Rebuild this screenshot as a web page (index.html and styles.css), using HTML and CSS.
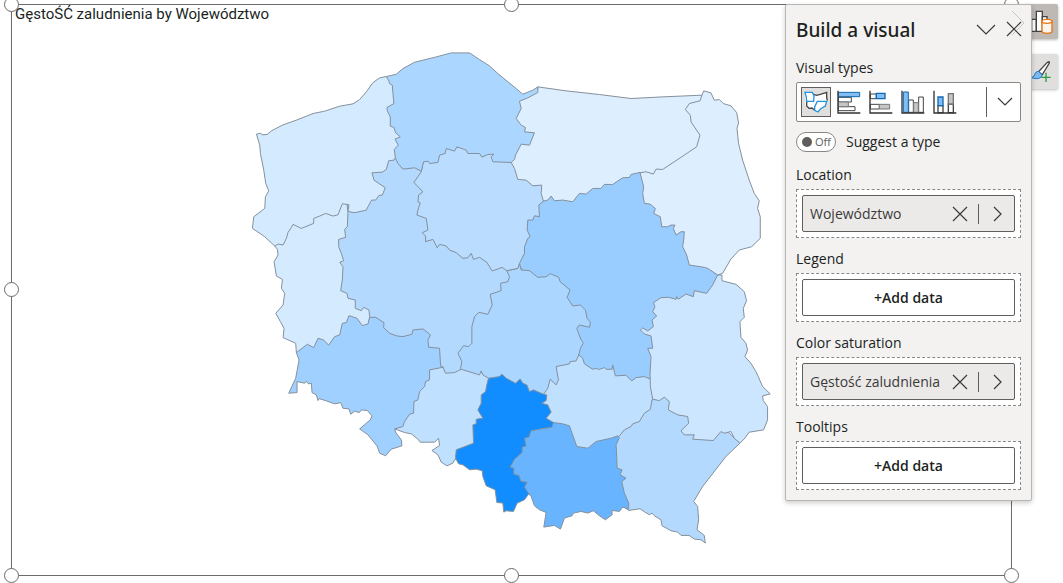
FILE: index.html
```html
<!DOCTYPE html>
<html lang="pl">
<head>
<meta charset="utf-8">
<title>Gęstość zaludnienia</title>
<link rel="stylesheet" href="styles.css">
</head>
<body>
<main class="report">
  <section class="visual" aria-labelledby="visual-title">
    <h1 class="visual-title" id="visual-title">GęstoŚĆ zaludnienia by Województwo</h1>
    <svg class="map" viewBox="36 15 3000 1710" role="img" aria-label="Województwa">
      <polygon class="d3" points="1090,540 1180,450 1260,450 1400,650 1480,760 1600,860 1500,1080 1380,1150 1250,1080 1100,1000 1000,900 980,800 1020,620"/>
      <polygon class="d6" points="1500,720 1660,540 1900,480 2000,520 2100,780 2155,826 2150,900 2000,1000 2000,1180 1900,1200 1700,1150 1650,1050 1600,850"/>
      <polygon class="d4" points="1522,812 1530,830 1525,845 1503,850 1505,872 1472,883 1478,915 1465,943 1438,937 1425,950 1417,980 1417,1030 1407,1040 1392,1037 1375,1060 1387,1085 1383,1105 1400,1200 1600,1240 1760,1160 1738,1065 1743,1045 1752,1028 1745,1020 1732,985 1740,975 1770,982 1773,967 1763,955 1758,930 1743,915 1720,918 1703,892 1712,870 1682,845 1678,832 1653,821 1640,830 1615,832 1590,812 1565,810 1560,790 1555,805"/>
      <polygon class="d2b" points="1265,515 1243,547 1255,560 1270,575 1257,585 1255,605 1262,608 1255,630 1252,645 1280,655 1285,690 1268,698 1278,708 1278,725 1300,718 1313,743 1320,733 1340,738 1350,750 1370,758 1390,775 1405,773 1415,760 1422,778 1440,772 1462,787 1478,813 1508,802 1522,812 1555,805 1560,790 1575,760 1575,740 1585,715 1592,710 1583,690 1585,660 1600,660 1605,647 1620,650 1618,615 1632,603 1660,560 1600,440 1280,440"/>
      <polygon class="d2" points="1632,1183 1645,1165 1652,1138 1670,1155 1677,1140 1670,1100 1710,1092 1712,1085 1730,1083 1738,1065 1750,1075 1755,1092 1780,1108 1790,1105 1797,1109 1815,1103 1820,1108 1838,1108 1840,1095 1848,1128 1880,1126 1897,1143 1910,1133 1935,1130 1952,1137 2000,1180 1980,1300 1850,1400 1700,1380 1610,1230"/>
      <polygon class="d1" points="825,738 833,748 835,765 823,785 830,828 848,838 845,865 855,880 850,915 828,940 842,965 853,985 850,1013 888,1030 890,1058 950,1080 1050,1020 1105,995 1110,950 1108,930 1092,922 1085,932 1067,925 1067,900 1045,895 1042,880 1023,872 1028,840 1030,800 1020,787 1032,782 1025,760 1017,740 1017,718 1038,712 1035,688 1043,680 1045,634 1040,600 920,600 840,700"/>
      <polygon class="d5" points="890,1058 923,1033 942,1043 955,1015 972,1020 987,1036 1005,1010 1020,1005 1028,970 1040,968 1048,947 1072,955 1088,977 1105,972 1110,952 1128,952 1153,968 1152,983 1170,1000 1192,1008 1210,1010 1237,1003 1240,990 1270,987 1293,1005 1285,1020 1287,1042 1320,1045 1323,1098 1330,1100 1340,1200 1250,1270 1185,1290 1190,1300 1205,1320 1207,1338 1175,1348 1158,1368 1140,1360 1132,1338 1105,1305 1080,1287 1112,1260 1117,1248 1103,1232 1085,1230 1079,1238 1065,1234 1053,1243 1048,1227 1030,1225 1023,1208 1005,1212 980,1203 958,1196 955,1202 950,1185 937,1178 935,1150 926,1152 920,1144 915,1150 892,1145 892,1178 867,1180 888,1135 898,1080"/>
      <polygon class="d0" points="1615,260 1700,272 1800,283 1895,295 1990,290 2108,285 2130,400 2120,450 1960,540 1922,517 1895,523 1890,532 1870,533 1840,553 1815,553 1805,565 1780,565 1760,582 1740,580 1720,605 1690,600 1665,602 1655,588 1645,600 1632,603 1625,580 1627,555 1600,557 1580,540 1555,538 1545,505 1535,487 1500,450 1500,300 1540,300 1572,288 1615,266"/>
      <polygon class="d0" points="2108,285 2113,272 2135,278 2145,300 2160,298 2172,310 2195,317 2212,337 2218,368 2213,385 2218,430 2230,480 2250,540 2265,580 2280,602 2275,625 2283,650 2283,715 2257,740 2220,750 2195,777 2170,820 2155,825 2125,805 2115,802 2070,795 2062,765 2050,740 2053,720 2055,695 2045,695 2030,705 2022,685 2027,675 2015,675 2005,680 1987,680 1983,650 1963,640 1968,625 1952,612 1935,610 1930,580 1933,560 1922,518 1940,515 1962,522 1970,507 1990,508 2055,465 2092,440 2102,405 2075,365 2073,345 2058,328 2070,310 2102,302"/>
      <polygon class="d4" points="1160,229 1190,222 1210,205 1245,186 1310,170 1355,158 1410,158 1440,178 1470,197 1495,220 1550,265 1570,282 1600,270 1615,260 1615,277 1585,293 1560,303 1565,325 1550,355 1565,375 1578,382 1575,395 1605,398 1590,435 1565,432 1548,465 1545,478 1535,487 1480,485 1475,470 1483,462 1465,463 1447,471 1440,460 1405,460 1400,450 1372,440 1365,453 1340,445 1337,460 1320,465 1315,487 1290,490 1285,483 1272,485 1265,513 1245,503 1210,507 1195,490 1187,472 1150,460 1130,260"/>
      <polygon class="d1" points="770,402 783,399 787,404 802,403 815,392 850,374 890,360 940,340 975,333 1020,318 1060,311 1080,298 1100,275 1120,247 1140,233 1160,229 1168,242 1170,250 1178,255 1180,280 1183,310 1162,322 1163,332 1172,350 1172,378 1183,382 1188,398 1202,410 1186,417 1196,435 1184,448 1187,472 1183,480 1167,482 1160,508 1148,516 1117,518 1123,540 1157,563 1148,585 1138,586 1128,600 1116,600 1105,620 1100,630 1065,638 1045,634 1048,614 1028,611 1015,644 1000,648 978,640 960,648 942,655 942,670 905,685 880,673 875,682 865,697 860,715 850,735 835,732 825,738 795,710 758,685 762,650 795,625 797,590 807,572 798,550 792,510 782,460 780,435"/>
      <polygon class="d3" points="1860,1308 1875,1290 1895,1280 1900,1272 1920,1265 1935,1240 1953,1228 1958,1200 2050,1180 2180,1290 2222,1330 2180,1370 2110,1460 2083,1505 2095,1520 2098,1560 2093,1590 2115,1607 2118,1630 2105,1620 2085,1618 2070,1607 2045,1607 2035,1597 2015,1593 1988,1578 1985,1560 1965,1548 1958,1540 1950,1545 1938,1538 1922,1527 1888,1532 1820,1480 1820,1330"/>
      <polygon class="d1b" points="2155,825 2168,825 2168,842 2210,853 2235,875 2242,902 2232,925 2235,952 2222,965 2225,1012 2240,1030 2245,1050 2237,1070 2255,1090 2270,1115 2277,1130 2290,1160 2313,1182 2290,1188 2292,1202 2305,1220 2305,1260 2293,1290 2250,1297 2235,1317 2222,1330 2205,1315 2195,1295 2175,1300 2165,1295 2142,1322 2080,1318 2085,1305 2055,1305 2045,1293 2068,1270 2065,1250 2035,1245 2007,1230 2010,1205 1995,1192 1980,1202 1960,1198 1953,1160 1952,1120 1955,1070 1945,1045 1960,1045 1955,1008 1935,1002 1923,990 1930,984 1945,993 1962,980 1958,960 1972,948 1960,935 1967,920 1962,908 1985,893 2008,892 2030,898 2032,890 2037,898 2060,882 2082,890 2085,872 2122,880 2140,855"/>
      <polygon class="d7" points="1662,1268 1690,1272 1710,1278 1715,1292 1725,1320 1732,1340 1765,1345 1790,1325 1835,1315 1855,1308 1860,1313 1850,1335 1852,1370 1853,1405 1868,1410 1862,1425 1880,1435 1867,1445 1875,1480 1888,1510 1888,1528 1870,1522 1860,1535 1838,1532 1838,1545 1818,1560 1800,1548 1782,1533 1765,1540 1745,1535 1722,1540 1718,1548 1695,1555 1683,1588 1665,1577 1633,1582 1640,1538 1620,1530 1605,1518 1595,1490 1588,1482 1500,1400 1600,1270"/>
      <polygon class="d2" points="1185,1287 1210,1280 1215,1265 1230,1243 1242,1240 1243,1205 1255,1200 1260,1175 1275,1160 1278,1145 1290,1140 1290,1110 1305,1107 1330,1102 1338,1120 1365,1118 1385,1108 1440,1125 1445,1113 1450,1125 1467,1135 1520,1180 1480,1330 1400,1370 1365,1380 1360,1390 1342,1398 1325,1387 1315,1365 1297,1352 1320,1337 1317,1315 1305,1327 1262,1327 1255,1318 1235,1302 1215,1298"/>
      <polygon class="d8" points="1467,1135 1500,1130 1507,1123 1520,1135 1548,1150 1562,1137 1570,1150 1582,1155 1590,1175 1602,1170 1632,1183 1642,1185 1640,1202 1627,1210 1645,1215 1655,1237 1640,1255 1662,1268 1657,1282 1625,1287 1595,1293 1588,1312 1575,1315 1580,1338 1568,1342 1568,1358 1545,1378 1532,1402 1543,1405 1543,1423 1558,1427 1565,1445 1583,1447 1575,1462 1588,1482 1575,1500 1553,1510 1542,1535 1520,1533 1513,1537 1510,1510 1492,1508 1487,1470 1460,1458 1450,1430 1448,1413 1430,1408 1410,1410 1390,1395 1377,1392 1368,1375 1370,1350 1422,1330 1420,1275 1430,1272 1430,1258 1450,1255 1435,1230 1445,1210 1445,1185 1458,1175 1463,1150"/>
    </svg>
    <span class="handle top left"></span>
    <span class="handle top center"></span>
    <span class="handle top right"></span>
    <span class="handle middle left"></span>
    <span class="handle bottom left"></span>
    <span class="handle bottom center"></span>
    <span class="handle bottom right"></span>
  </section>

  <nav class="side-tabs" aria-label="Panes">
    <button class="side-tab active" type="button" aria-label="Build visual">
      <svg class="tab-icon" viewBox="0 0 66 72"><g fill="#fff" stroke="#444" stroke-width="4"><path d="M2 28h14v36H2z"/><path d="M16 4h18v60H16z"/><path d="M34 20h14v20H34z"/></g><path d="M33 34v30c0 8 30 8 30 0V34" fill="#faf4ef" stroke="#e87511" stroke-width="4"/><ellipse cx="48" cy="34" rx="15" ry="6" fill="#fff" stroke="#e87511" stroke-width="4"/></svg>
    </button>
    <button class="side-tab" type="button" aria-label="Format visual">
      <svg class="tab-icon" viewBox="0 0 66 72"><path d="M22 36 48 8q8-6 7 1L34 44z" fill="#fff" stroke="#444" stroke-width="4"/><path d="M22 34c-12 0-8 14-20 19 14 6 32 3 31-10z" fill="#7db9ef" stroke="#1b78c8" stroke-width="3"/><path d="M45 38v28M31 52h28" fill="none" stroke="#2c9c49" stroke-width="4"/></svg>
    </button>
  </nav>

  <aside class="panel" aria-labelledby="panel-title">
    <header class="panel-header">
      <h2 class="panel-title" id="panel-title">Build a visual</h2>
      <button class="icon-button" type="button" aria-label="Collapse"><svg class="header-icon" viewBox="0 0 20 20"><path d="m1 5 9 9 9-9"/></svg></button>
      <button class="icon-button" type="button" aria-label="Close"><svg class="header-icon" viewBox="0 0 20 20"><path class="ghost" d="m8-9 12 12L8 15"/><path d="m3 2 14 14M17 2 3 16"/></svg></button>
    </header>

    <h3 class="label">Visual types</h3>
    <div class="types">
      <button class="type selected" type="button" aria-label="Shape map"><svg class="type-icon" viewBox="0 0 72 72"><path d="M3 7h22l12 9 12-3 19-5v14l2 10-5 15-15 8-8 10-18-9-14-1-6-8V34L2 16z" fill="#fff"/><path d="M27 12l10 4 12-3 19-6v15l2 10M8 34v14l7 7 9-1 8 7" fill="none" stroke="#444" stroke-width="4"/><path d="M3 7h22l5 10-1 17H8l-1-12zM40 34h28l-4 14-14 8-8 10-10-5V50z" fill="none" stroke="#2492dc" stroke-width="4"/></svg></button>
      <button class="type" type="button" aria-label="Stacked bar chart"><svg class="type-icon" viewBox="0 0 72 72"><path d="M4 22h39v14H4zM4 50h50v12H4z" fill="#fff" stroke="#444" stroke-width="3"/><path d="M4 36h30v14H4z" fill="#c8c6c4" stroke="#777" stroke-width="3"/><path d="M4 7h64v13H4z" fill="#82bef5" stroke="#1269ae" stroke-width="3"/><path d="M3 2v67h67" fill="none" stroke="#333" stroke-width="4"/></svg></button>
      <button class="type" type="button" aria-label="Clustered bar chart"><svg class="type-icon" viewBox="0 0 72 72"><path d="M4 12h18v14H4zM4 43h27v14H4z" fill="#fff" stroke="#444" stroke-width="3"/><path d="M22 10h26v16H22z" fill="#82bef5" stroke="#1269ae" stroke-width="4"/><path d="M31 43h31v14H31z" fill="#c8c6c4" stroke="#777" stroke-width="3"/><path d="M3 2v67h67" fill="none" stroke="#333" stroke-width="4"/></svg></button>
      <button class="type" type="button" aria-label="Clustered column chart"><svg class="type-icon" viewBox="0 0 72 72"><path d="M23 30h14v37H23zM53 21h14v46H53z" fill="#fff" stroke="#444" stroke-width="3"/><path d="M38 38h14v29H38z" fill="#c8c6c4" stroke="#777" stroke-width="3"/><path d="M7 6h15v61H7z" fill="#82bef5" stroke="#1269ae" stroke-width="3"/><path d="M3 2v67h67" fill="none" stroke="#333" stroke-width="4"/></svg></button>
      <button class="type" type="button" aria-label="Stacked column chart"><svg class="type-icon" viewBox="0 0 72 72"><path d="M15 47h15v21H15zM46 42h15v26H46z" fill="#fff" stroke="#444" stroke-width="4"/><path d="M15 21h15v26H15z" fill="#82bef5" stroke="#1269ae" stroke-width="4"/><path d="M46 11h15v31H46z" fill="#c8c6c4" stroke="#777" stroke-width="4"/><path d="M3 2v67h67" fill="none" stroke="#333" stroke-width="4"/></svg></button>
      <button class="more" type="button" aria-label="More visual types"><svg class="small-icon" viewBox="0 0 16 16"><path d="m1 4 7 7 7-7"/></svg></button>
    </div>

    <label class="suggest">
      <span class="switch"><input class="switch-input" type="checkbox"><span>Off</span></span>
      <span>Suggest a type</span>
    </label>

    <section class="field">
      <h3 class="label">Location</h3>
      <div class="well"><div class="chip"><span class="chip-name">Województwo</span>
        <button class="chip-button" type="button" aria-label="Remove Województwo"><svg class="small-icon" viewBox="0 0 16 16"><path d="m1 1 14 14M15 1 1 15"/></svg></button>
        <button class="chip-button open" type="button" aria-label="Województwo options"><svg class="small-icon" viewBox="0 0 16 16"><path d="m4 1 7 7-7 7"/></svg></button>
      </div></div>
    </section>
    <section class="field">
      <h3 class="label">Legend</h3>
      <div class="well"><button class="add" type="button">+Add data</button></div>
    </section>
    <section class="field">
      <h3 class="label">Color saturation</h3>
      <div class="well"><div class="chip"><span class="chip-name">Gęstość zaludnienia</span>
        <button class="chip-button" type="button" aria-label="Remove Gęstość zaludnienia"><svg class="small-icon" viewBox="0 0 16 16"><path d="m1 1 14 14M15 1 1 15"/></svg></button>
        <button class="chip-button open" type="button" aria-label="Gęstość zaludnienia options"><svg class="small-icon" viewBox="0 0 16 16"><path d="m4 1 7 7-7 7"/></svg></button>
      </div></div>
    </section>
    <section class="field">
      <h3 class="label">Tooltips</h3>
      <div class="well"><button class="add" type="button">+Add data</button></div>
    </section>
  </aside>
</main>
</body>
</html>
```
FILE: styles.css
```css
* {
  box-sizing: border-box;
}

body {
  margin: 0;
  background: #fff;
  color: #201f1e;
  font-family: "Open Sans", "Noto Sans", sans-serif;
  font-size: 14px;
  line-height: 20px;
}

h1, h2, h3 {
  margin: 0;
  font-weight: 400;
}

button {
  padding: 0;
  border: 0;
  background: none;
  color: inherit;
  font: inherit;
}

svg {
  display: block;
}

.report {
  position: relative;
  min-height: 100vh;
  padding: 4px 51px 7px 11px;
  display: flex;
  overflow: hidden;
}

/* selected map visual */
.visual {
  position: relative;
  flex: 1;
  border: 1px solid #6b6b6b;
}

.visual-title {
  position: absolute;
  top: 0;
  left: 3px;
  font-family: Roboto, sans-serif;
  font-size: 15px;
  line-height: 18px;
}

.map {
  width: 100%;
  height: 100%;
}

.map polygon {
  stroke: #84909b;
  stroke-width: 3;
  stroke-linejoin: round;
}

.d0 { fill: #ddeeff; }
.d1 { fill: #d4eaff; }
.d1b { fill: #cce6ff; }
.d2 { fill: #c0e0ff; }
.d2b { fill: #b9dcff; }
.d3 { fill: #b3d9ff; }
.d4 { fill: #abd6ff; }
.d5 { fill: #a0d0ff; }
.d6 { fill: #99ccff; }
.d7 { fill: #69b4ff; }
.d8 { fill: #118dff; }

.handle {
  position: absolute;
  width: 15px;
  height: 15px;
  border: 1px solid #6b6b6b;
  border-radius: 50%;
  background: #fff;
}

.top { top: -8px; }
.middle { top: calc(50% - 8px); }
.bottom { bottom: -8px; }
.left { left: -8px; }
.center { left: calc(50% - 8px); }
.right { right: -8px; }

/* pane switcher behind the panel */
.side-tabs {
  position: absolute;
  top: 4px;
  right: 5px;
  display: grid;
  gap: 15px;
}

.side-tab {
  width: 32px;
  height: 35px;
  padding-left: 5px;
  border-radius: 2px;
  background: #e1dfdd;
  box-shadow: 0 1px 3px #0004;
}

.side-tab.active {
  background: #bfb9b5;
}

.tab-icon {
  width: 22px;
  height: 24px;
}

/* build panel */
.panel {
  position: absolute;
  top: 4px;
  right: 31px;
  width: 247px;
  padding: 9px 10px 10px;
  border: 1px solid #b8b6b4;
  border-radius: 2px;
  background: #f3f2f1;
  box-shadow: 0 2px 5px #0003;
}

.panel-header {
  display: flex;
  align-items: center;
  gap: 8px;
  height: 32px;
  margin-bottom: 12px;
}

.panel-title {
  flex: 1;
  font-family: "Noto Sans", sans-serif;
  font-size: 19px;
  font-weight: 500;
  line-height: 24px;
}

.icon-button:last-child {
  margin-right: -3px;
}

.header-icon {
  width: 20px;
  height: 20px;
  overflow: visible;
}

.header-icon path,
.small-icon path {
  fill: none;
  stroke: #3b3a39;
  stroke-width: 1.2;
}

.header-icon .ghost {
  stroke: #c8c6c4;
  stroke-width: 1;
}

.small-icon {
  width: 16px;
  height: 16px;
}

.label {
  font-size: 14px;
  line-height: 20px;
  margin-bottom: 4px;
}

.types {
  display: flex;
  align-items: center;
  gap: 2px;
  height: 40px;
  padding: 4px;
  border: 1px solid #8a8886;
  border-radius: 2px;
  background: #fff;
}

.type {
  width: 30px;
  height: 30px;
  padding: 3px 2px 3px 4px;
}

.type.selected {
  padding: 2px;
  border: 1px solid #605e5c;
  background: #e1dfdd;
}

.type-icon {
  width: 24px;
  height: 24px;
}

.more {
  display: grid;
  place-items: center;
  width: 30px;
  height: 30px;
  margin-left: auto;
  padding-left: 6px;
  border-left: 1px solid #605e5c;
}

.suggest {
  display: flex;
  align-items: center;
  gap: 10px;
  height: 20px;
  margin: 10px 0 13px;
}

.switch {
  display: flex;
  align-items: center;
  gap: 3px;
  width: 40px;
  height: 20px;
  padding-left: 5px;
  border: 1px solid #8a8886;
  border-radius: 10px;
  background: #fff;
  color: #605e5c;
  font-size: 11px;
}

.switch-input {
  appearance: none;
  width: 10px;
  height: 10px;
  margin: 0;
  border-radius: 50%;
  background: #605e5c;
}

.field + .field {
  margin-top: 11px;
}

.well {
  padding: 5px;
  border: 1px dashed #8a8886;
  background: #fff;
}

.chip,
.add {
  width: 100%;
  height: 37px;
  border: 1px solid #605e5c;
  border-radius: 2px;
}

.chip {
  display: flex;
  align-items: center;
  padding: 0 8px 0 7px;
  background: #ebeae9;
  color: #3b3a39;
}

.chip-name {
  flex: 1;
  white-space: nowrap;
}

.chip-button.open {
  margin-left: 10px;
  padding: 2px 0 2px 11px;
  border-left: 1px solid #605e5c;
}

.add {
  display: block;
  background: #fff;
  font-weight: 600;
}
```
